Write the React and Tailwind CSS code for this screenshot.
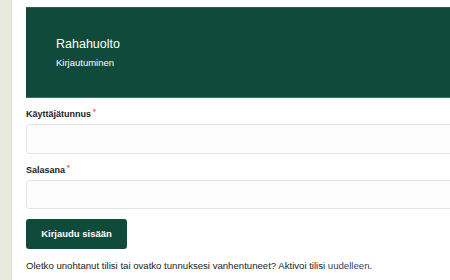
export default function App() {
  return (
    <div className="flex min-h-[280px] bg-white font-['Liberation_Sans',Arial,sans-serif] text-[#222]">
      <div className="w-[12px] shrink-0 bg-[#e8e9dd] border-r border-[#dcdcd0]" />
      <main className="flex-1 pl-[14px] pt-[7px] overflow-hidden">
        <div className="w-[440px] border-t border-[#2e5e50] border-b border-b-[#3d7464] bg-[#0f4a3a] pl-[30px] pt-[29px] pb-[28px] text-white">
          <h1 className="text-[12.5px] leading-[14px]">Rahahuolto</h1>
          <p className="mt-[6px] text-[9.5px] leading-[12px]">Kirjautuminen</p>
        </div>

        <form className="mt-[10px] w-[440px]">
          <label className="block text-[9px] font-bold leading-[12px]">
            Käyttäjätunnus<span className="ml-[2px] align-top text-[7px] leading-[8px] text-[#e04848]">*</span>
          </label>
          <input
            type="text"
            className="mt-[4px] block h-[30px] w-full rounded-[3px] border border-[#e4e4e4] bg-[#fcfcfc]"
          />

          <label className="mt-[10px] block text-[9px] font-bold leading-[12px]">
            Salasana<span className="ml-[2px] align-top text-[7px] leading-[8px] text-[#e04848]">*</span>
          </label>
          <input
            type="password"
            className="mt-[4px] block h-[29px] w-full rounded-[3px] border border-[#e4e4e4] bg-[#fcfcfc]"
          />

          <button
            type="button"
            className="mt-[10px] block h-[30px] w-[101px] rounded-[3px] bg-[#0f4a3a] text-[9.5px] font-bold text-white"
          >
            Kirjaudu sisään
          </button>

          <p className="mt-[10px] text-[9.6px] leading-[14px]">
            Oletko unohtanut tilisi tai ovatko tunnuksesi vanhentuneet? Aktivoi tilisi{" "}
            <a className="text-[#34425e]">uudelleen</a>.
          </p>
        </form>
      </main>
    </div>
  );
}
